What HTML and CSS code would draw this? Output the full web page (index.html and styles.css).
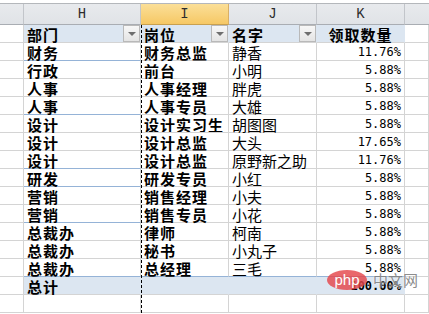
FILE: index.html
```html
<!DOCTYPE html>
<html lang="zh-CN">
<head>
<meta charset="utf-8">
<title>领取数量</title>
<link rel="stylesheet" href="styles.css">
</head>
<body>
<div class="window">
  <div class="topline"></div>
  <div class="sheet">
    <div class="ch"></div>
    <div class="ch">H</div>
    <div class="ch sel">I</div>
    <div class="ch">J</div>
    <div class="ch">K</div>
    <div class="ch last"></div>

    <div class="c"></div>
    <div class="c th"><span>部门</span><i class="dd"></i></div>
    <div class="c th"><span>岗位</span><i class="dd"></i></div>
    <div class="c th"><span>名字</span><i class="dd"></i></div>
    <div class="c th center"><span>领取数量</span></div>
    <div class="c"></div>

    <div class="c"></div><div class="c b grp">财务</div><div class="c b">财务总监</div><div class="c">静香</div><div class="c n">11.76%</div><div class="c"></div>
    <div class="c"></div><div class="c b">行政</div><div class="c b">前台</div><div class="c">小明</div><div class="c n">5.88%</div><div class="c"></div>
    <div class="c"></div><div class="c b">人事</div><div class="c b">人事经理</div><div class="c">胖虎</div><div class="c n">5.88%</div><div class="c"></div>
    <div class="c"></div><div class="c b grp">人事</div><div class="c b">人事专员</div><div class="c">大雄</div><div class="c n">5.88%</div><div class="c"></div>
    <div class="c"></div><div class="c b">设计</div><div class="c b clip">设计实习生</div><div class="c">胡图图</div><div class="c n">5.88%</div><div class="c"></div>
    <div class="c"></div><div class="c b">设计</div><div class="c b">设计总监</div><div class="c">大头</div><div class="c n">17.65%</div><div class="c"></div>
    <div class="c"></div><div class="c b grp">设计</div><div class="c b">设计总监</div><div class="c">原野新之助</div><div class="c n">11.76%</div><div class="c"></div>
    <div class="c"></div><div class="c b grp">研发</div><div class="c b">研发专员</div><div class="c">小红</div><div class="c n">5.88%</div><div class="c"></div>
    <div class="c"></div><div class="c b">营销</div><div class="c b">销售经理</div><div class="c">小夫</div><div class="c n">5.88%</div><div class="c"></div>
    <div class="c"></div><div class="c b grp">营销</div><div class="c b">销售专员</div><div class="c">小花</div><div class="c n">5.88%</div><div class="c"></div>
    <div class="c"></div><div class="c b">总裁办</div><div class="c b">律师</div><div class="c">柯南</div><div class="c n">5.88%</div><div class="c"></div>
    <div class="c"></div><div class="c b">总裁办</div><div class="c b">秘书</div><div class="c">小丸子</div><div class="c n">5.88%</div><div class="c"></div>
    <div class="c"></div><div class="c b grp">总裁办</div><div class="c b grp">总经理</div><div class="c grp">三毛</div><div class="c n grp">5.88%</div><div class="c"></div>

    <div class="c"></div>
    <div class="c b tot">总计</div>
    <div class="c tot"></div>
    <div class="c tot"></div>
    <div class="c n tot nb">100.00%</div>
    <div class="c"></div>

    <div class="c"></div><div class="c"></div><div class="c"></div><div class="c"></div><div class="c"></div><div class="c"></div>
  </div>
  <div class="pagebreak"></div>
  <div class="watermark"><span class="logo">php</span><span class="site">中文网</span></div>
</div>
</body>
</html>
```
FILE: styles.css
```css
* { box-sizing: border-box; }
html, body { margin: 0; padding: 0; background: #fff; }
.window {
  position: relative;
  width: 429px;
  height: 314px;
  overflow: hidden;
  background: #fff;
  font-family: "Noto Sans CJK SC", "Noto Sans", sans-serif;
  color: #000;
}
.topline {
  height: 4px;
  border-bottom: 1px solid #b4b7bb;
}
.sheet {
  display: grid;
  grid-template-columns: 24px 117px 88px 88px 88px 1fr;
  grid-template-rows: 21px;
  grid-auto-rows: 18px;
}
.ch {
  background: linear-gradient(#e8eaed, #e0e3e7);
  border-right: 1px solid #c2c5ca;
  border-bottom: 1px solid #a9adb3;
  font-family: "Liberation Mono", monospace;
  font-size: 14px;
  line-height: 20px;
  text-align: center;
  color: #2c2c2c;
}
.ch.sel {
  background: linear-gradient(#fbdf98, #f6c865);
  border-bottom-color: #c8a050;
  border-right-color: #d9b066;
}
.ch.last { border-right: none; }
.c {
  border-right: 1px solid #d4d4d4;
  border-bottom: 1px solid #d4d4d4;
  font-size: 15px;
  line-height: 17px;
  padding: 1px 0 0 3px;
  white-space: nowrap;
  overflow: visible;
}
.c.b { font-weight: bold; letter-spacing: 1px; }
.clip { overflow: hidden; }
.c.grp { border-bottom-color: #95b3d7; }
.th {
  background: #dce6f1;
  font-weight: bold;
  letter-spacing: 1px;
  display: flex;
  align-items: flex-start;
  border-right-color: #dce6f1;
  padding-right: 0;
}
.th.center { justify-content: center; padding-left: 0; }
.dd {
  margin-left: auto;
  width: 17px;
  height: 17px;
  margin-top: -1px;
  border: 1px solid #b9b9b9;
  background: linear-gradient(#f7f7f7, #e4e4e4);
  position: relative;
}
.dd::after {
  content: "";
  position: absolute;
  left: 4px;
  top: 6px;
  border-left: 4px solid transparent;
  border-right: 4px solid transparent;
  border-top: 4px solid #6e6e6e;
}
.n {
  font-family: "DejaVu Sans Mono", monospace;
  font-size: 12px;
  text-align: right;
  padding: 1px 3px 0 0;
  letter-spacing: 0;
}
.tot {
  background: #dce6f1;
  border-right-color: #dce6f1;
}
.nb { font-weight: bold; }
.pagebreak {
  position: absolute;
  left: 141px;
  top: 25px;
  bottom: 0;
  width: 1px;
  background: repeating-linear-gradient(to bottom, #000 0 3px, transparent 3px 5px);
}
.watermark {
  position: absolute;
  left: 327px;
  top: 270px;
  display: flex;
  align-items: center;
  gap: 6px;
}
.logo {
  width: 40px;
  height: 20px;
  border-radius: 50%;
  background: rgba(228, 70, 75, 0.82);
  color: #fff;
  font-family: "Liberation Sans", sans-serif;
  font-size: 15px;
  line-height: 19px;
  text-align: center;
}
.site {
  color: rgba(110, 110, 110, 0.8);
  font-size: 15px;
  line-height: 20px;
  text-shadow: 0 0 2px #fff;
}
```
